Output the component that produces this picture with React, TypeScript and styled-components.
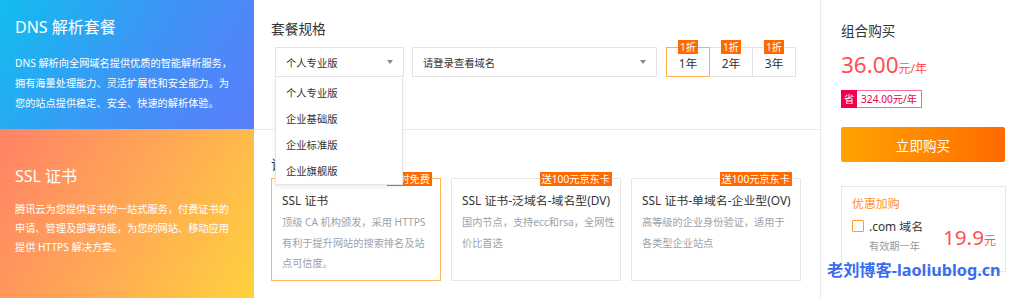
import React from "react";
import styled, { createGlobalStyle } from "styled-components";

const Global = createGlobalStyle`
  html, body { margin: 0; padding: 0; background: #fff; }
  body { font-family: "Noto Sans", "Noto Sans CJK SC", sans-serif; color: #333; }
  * { box-sizing: border-box; }
`;

const Page = styled.div`
  position: relative;
  display: flex;
  width: 1024px;
  height: 298px;
  overflow: hidden;
  background: #fff;
`;

const LeftCol = styled.div`
  width: 254px;
  display: flex;
  flex-direction: column;
`;

const Promo = styled.div<{ $variant: "dns" | "ssl" }>`
  height: ${(p) => (p.$variant === "dns" ? "129px" : "auto")};
  flex: ${(p) => (p.$variant === "dns" ? "none" : "1")};
  padding: ${(p) => (p.$variant === "dns" ? "17px" : "37px")} 15px 0 15px;
  color: #fff;
  background: ${(p) =>
    p.$variant === "dns"
      ? "linear-gradient(120deg, #12bdf0 0%, #3f93f5 55%, #5a7dfa 100%)"
      : "linear-gradient(120deg, #ff8266 0%, #ffa855 50%, #ffd23e 100%)"};
`;

const PromoTitle = styled.div`
  font-size: 16px;
  line-height: 20px;
`;

const PromoDesc = styled.div<{ $lh: number; $mt: number }>`
  margin-top: ${(p) => p.$mt}px;
  font-size: 10.2px;
  line-height: ${(p) => p.$lh}px;
  white-space: nowrap;
`;

const Middle = styled.div`
  width: 567px;
  border-right: 1px solid #ebebeb;
  display: flex;
  flex-direction: column;
`;

const SpecSection = styled.div`
  height: 130px;
  border-bottom: 1px solid #ebebeb;
  padding: 19px 0 0 17px;
`;

const SectionTitle = styled.div`
  font-size: 13.7px;
  line-height: 20px;
  color: #333;
`;

const SpecRow = styled.div`
  margin: 8px 0 0 4px;
  display: flex;
  align-items: flex-start;
`;

const SelectWrap = styled.div`
  position: relative;
`;

const SelectBox = styled.div<{ $w: number }>`
  width: ${(p) => p.$w}px;
  height: 30px;
  border: 1px solid #e3e3e3;
  padding: 0 10px;
  display: flex;
  align-items: center;
  justify-content: space-between;
  font-size: 10.3px;
  color: #333;
  background: #fff;
`;

const Caret = styled.span`
  width: 0;
  height: 0;
  border-left: 3.5px solid transparent;
  border-right: 3.5px solid transparent;
  border-top: 4px solid #8a8a8a;
`;

const Menu = styled.div`
  position: absolute;
  top: 31px;
  left: 0;
  width: 128px;
  padding-top: 2px;
  background: #fff;
  border: 1px solid #e6e6e6;
  border-top: none;
  box-shadow: 0 2px 4px rgba(0, 0, 0, 0.08);
  z-index: 5;
`;

const MenuItem = styled.div`
  height: 26px;
  line-height: 26px;
  padding-left: 10px;
  font-size: 10.3px;
  color: #333;
`;

const Gap = styled.div<{ $w: number }>`
  width: ${(p) => p.$w}px;
  flex: none;
`;

const Years = styled.div`
  display: flex;
`;

const YearBox = styled.div<{ $active?: boolean }>`
  position: relative;
  width: 44px;
  height: 30px;
  margin-left: -1px;
  border: 1px solid ${(p) => (p.$active ? "#ffb14e" : "#e3e3e3")};
  z-index: ${(p) => (p.$active ? 1 : 0)};
  display: flex;
  align-items: center;
  justify-content: center;
  font-size: 11.9px;
  color: #333;
  background: #fff;
  &:first-child { margin-left: 0; }
`;

const Discount = styled.span`
  position: absolute;
  top: -8px;
  left: 50%;
  transform: translateX(-50%);
  height: 14px;
  line-height: 14px;
  padding: 0 2px;
  background: #ff6a00;
  color: #fff;
  font-size: 10.2px;
  white-space: nowrap;
`;

const CertSection = styled.div`
  padding: 25px 0 0 17px;
`;

const Cards = styled.div`
  margin-top: 3px;
  display: flex;
  gap: 10px;
`;

const Card = styled.div<{ $active?: boolean }>`
  position: relative;
  width: 170px;
  height: 103px;
  border: 1px solid ${(p) => (p.$active ? "#ffb55c" : "#e6e6e6")};
  padding: 11px 10px 0 10px;
`;

const CardBadge = styled.span`
  position: absolute;
  top: -7px;
  right: 8px;
  height: 14px;
  line-height: 14px;
  padding: 0 2px;
  background: #ff6a00;
  color: #fff;
  font-size: 10.2px;
  white-space: nowrap;
`;

const CardTitle = styled.div`
  font-size: 11.9px;
  line-height: 20px;
  color: #333;
  white-space: nowrap;
`;

const CardDesc = styled.div`
  margin-top: 2px;
  font-size: 10.2px;
  line-height: 20.5px;
  color: #9da2aa;
  white-space: nowrap;
`;

const RightCol = styled.div`
  flex: 1;
  padding: 21px 0 0 20px;
`;

const BuyTitle = styled.div`
  font-size: 13.6px;
  line-height: 20px;
  color: #333;
`;

const PriceLine = styled.div`
  margin-top: 9px;
  height: 30px;
  line-height: 30px;
  color: #ff4f4f;
  white-space: nowrap;
`;

const BigNum = styled.span<{ $size: number }>`
  font-size: ${(p) => p.$size}px;
`;

const Unit = styled.span`
  font-size: 12px;
`;

const Save = styled.div`
  margin-top: 10px;
  display: flex;
  height: 18px;
`;

const SaveTag = styled.span`
  width: 16px;
  background: #f2004f;
  color: #fff;
  font-size: 10.2px;
  line-height: 18px;
  text-align: center;
`;

const SaveAmount = styled.span`
  border: 1px solid #f76e8f;
  border-left: none;
  padding: 0 4px;
  font-size: 10.2px;
  line-height: 16px;
  color: #e8004d;
`;

const BuyButton = styled.button`
  margin-top: 19px;
  width: 164px;
  height: 35px;
  border: none;
  border-radius: 2px;
  background: linear-gradient(90deg, #ffa400 0%, #ff6b00 100%);
  color: #fff;
  font-family: inherit;
  font-size: 13.6px;
  display: flex;
  align-items: center;
  justify-content: center;
  padding: 0;
`;

const AddOn = styled.div`
  margin-top: 24px;
  width: 165px;
  height: 86px;
  border: 1px solid #e6e6e6;
  padding: 7px 9px 0 10px;
`;

const AddOnTitle = styled.div`
  font-size: 11.9px;
  line-height: 18px;
  color: #ff8f1f;
`;

const AddOnRow = styled.div`
  margin-top: 5px;
  display: flex;
  justify-content: space-between;
  align-items: flex-start;
`;

const AddOnInfo = styled.div`
  display: flex;
  flex-direction: column;
`;

const CheckLine = styled.label`
  display: flex;
  align-items: center;
  gap: 5px;
  font-size: 11.9px;
  line-height: 18px;
  color: #333;
`;

const CheckBox = styled.span`
  width: 12px;
  height: 12px;
  border: 1px solid #ff9a2e;
  border-radius: 1px;
  background: #fff;
`;

const Validity = styled.div`
  margin: 2px 0 0 17px;
  font-size: 10.2px;
  line-height: 18px;
  color: #999;
`;

const AddOnPrice = styled.div`
  margin-top: 5px;
  color: #ff4f4f;
  line-height: 30px;
  white-space: nowrap;
`;

const Watermark = styled.div`
  position: absolute;
  left: 827px;
  top: 259px;
  font-size: 16.2px;
  line-height: 22px;
  font-weight: 700;
  color: #3a6cf2;
  white-space: nowrap;
  z-index: 10;
`;

export default function App() {
  return (
    <>
      <Global />
      <Page>
        <LeftCol>
          <Promo $variant="dns">
            <PromoTitle>DNS 解析套餐</PromoTitle>
            <PromoDesc $lh={20} $mt={16}>
              DNS 解析向全网域名提供优质的智能解析服务，
              <br />
              拥有海量处理能力、灵活扩展性和安全能力。为
              <br />
              您的站点提供稳定、安全、快速的解析体验。
            </PromoDesc>
          </Promo>
          <Promo $variant="ssl">
            <PromoTitle>SSL 证书</PromoTitle>
            <PromoDesc $lh={19} $mt={14}>
              腾讯云为您提供证书的一站式服务，付费证书的
              <br />
              申请、管理及部署功能，为您的网站、移动应用
              <br />
              提供 HTTPS 解决方案。
            </PromoDesc>
          </Promo>
        </LeftCol>

        <Middle>
          <SpecSection>
            <SectionTitle>套餐规格</SectionTitle>
            <SpecRow>
              <SelectWrap>
                <SelectBox $w={129}>
                  <span>个人专业版</span>
                  <Caret />
                </SelectBox>
                <Menu>
                  <MenuItem>个人专业版</MenuItem>
                  <MenuItem>企业基础版</MenuItem>
                  <MenuItem>企业标准版</MenuItem>
                  <MenuItem>企业旗舰版</MenuItem>
                </Menu>
              </SelectWrap>
              <Gap $w={8} />
              <SelectBox $w={245}>
                <span>请登录查看域名</span>
                <Caret />
              </SelectBox>
              <Gap $w={9} />
              <Years>
                <YearBox $active>
                  <Discount>1折</Discount>1年
                </YearBox>
                <YearBox>
                  <Discount>1折</Discount>2年
                </YearBox>
                <YearBox>
                  <Discount>1折</Discount>3年
                </YearBox>
              </Years>
            </SpecRow>
          </SpecSection>

          <CertSection>
            <SectionTitle>证书类型</SectionTitle>
            <Cards>
              <Card $active>
                <CardBadge>限时免费</CardBadge>
                <CardTitle>SSL 证书</CardTitle>
                <CardDesc>
                  顶级 CA 机构颁发，采用 HTTPS
                  <br />
                  有利于提升网站的搜索排名及站
                  <br />
                  点可信度。
                </CardDesc>
              </Card>
              <Card>
                <CardBadge>送100元京东卡</CardBadge>
                <CardTitle>SSL 证书-泛域名-域名型(DV)</CardTitle>
                <CardDesc>
                  国内节点，支持ecc和rsa，全网性
                  <br />
                  价比首选
                </CardDesc>
              </Card>
              <Card>
                <CardBadge>送100元京东卡</CardBadge>
                <CardTitle>SSL 证书-单域名-企业型(OV)</CardTitle>
                <CardDesc>
                  高等级的企业身份验证，适用于
                  <br />
                  各类型企业站点
                </CardDesc>
              </Card>
            </Cards>
          </CertSection>
        </Middle>

        <RightCol>
          <BuyTitle>组合购买</BuyTitle>
          <PriceLine>
            <BigNum $size={22.5}>36.00</BigNum>
            <Unit>元/年</Unit>
          </PriceLine>
          <Save>
            <SaveTag>省</SaveTag>
            <SaveAmount>324.00元/年</SaveAmount>
          </Save>
          <BuyButton>立即购买</BuyButton>
          <AddOn>
            <AddOnTitle>优惠加购</AddOnTitle>
            <AddOnRow>
              <AddOnInfo>
                <CheckLine>
                  <CheckBox />
                  .com 域名
                </CheckLine>
                <Validity>有效期一年</Validity>
              </AddOnInfo>
              <AddOnPrice>
                <BigNum $size={20.7}>19.9</BigNum>
                <Unit>元</Unit>
              </AddOnPrice>
            </AddOnRow>
          </AddOn>
        </RightCol>

        <Watermark>老刘博客-laoliublog.cn</Watermark>
      </Page>
    </>
  );
}
